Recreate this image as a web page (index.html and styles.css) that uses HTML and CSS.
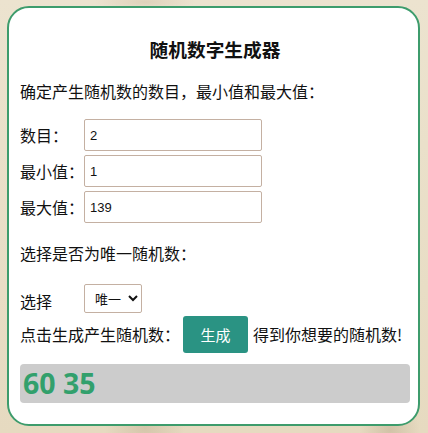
FILE: index.html
```html
<!DOCTYPE html>
<html lang="zh-CN">
<head>
  <meta charset="UTF-8" />
  <meta name="viewport" content="width=device-width, initial-scale=1.0"/>
  <title>随机数字生成器</title>
  <link rel="stylesheet" href="styles.css">
</head>
<body>
  <div class="card">
    <h1>随机数字生成器</h1>
    <p class="intro">确定产生随机数的数目，最小值和最大值：</p>
    <div class="field">
      <label for="count">数目：</label>
      <input id="count" type="text" value="2">
    </div>
    <div class="field">
      <label for="min">最小值：</label>
      <input id="min" type="text" value="1">
    </div>
    <div class="field">
      <label for="max">最大值：</label>
      <input id="max" type="text" value="139">
    </div>
    <p class="unique">选择是否为唯一随机数：</p>
    <div class="field select-row">
      <label for="unique">选择</label>
      <select id="unique">
        <option>唯一</option>
        <option>可重复</option>
      </select>
    </div>
    <div class="action-row">
      <span class="hint">点击生成产生随机数：</span>
      <button class="gen-button">生成</button>
      <span>得到你想要的随机数!</span>
    </div>
    <div class="result">60 35</div>
  </div>
</body>
</html>
```

FILE: styles.css
```css
* { margin: 0; padding: 0; box-sizing: border-box; }
body {
  font-family: "Noto Sans CJK SC", "Noto Sans", sans-serif;
  background-color: #eadfc8;
  background-image:
    radial-gradient(ellipse 40px 30px at 145px 428px, rgba(180, 160, 130, 0.35), transparent),
    radial-gradient(ellipse 30px 30px at 390px 430px, rgba(170, 150, 120, 0.35), transparent),
    radial-gradient(ellipse 50px 10px at 145px 2px, rgba(190, 170, 140, 0.3), transparent),
    linear-gradient(#ece3cf, #e6dac0);
  color: #111;
  padding: 6px 8px 7px 7px;
  height: 433px;
}
.card {
  background: #fff;
  border: 2px solid #3d9c6c;
  border-radius: 22px;
  padding: 25px 8px 20px 11px;
  height: 420px;
}
h1 {
  font-size: 18.7px;
  font-weight: bold;
  text-align: center;
  line-height: 32px;
  margin-bottom: 16px;
}
p, label, span {
  font-size: 16px;
  line-height: 21px;
}
.intro { margin-bottom: 17px; }
.field {
  display: flex;
  align-items: center;
  margin-bottom: 4px;
}
.field label { flex: none; width: 64px; }
input {
  flex: none;
  width: 178px;
  height: 32px;
  border: 1px solid #c4b0a2;
  border-radius: 2px;
  padding: 0 5px;
  font-family: "Liberation Sans", Arial, sans-serif;
  font-size: 13px;
  color: #111;
}
.unique { margin: 20px 0 20px; }
.select-row { margin-bottom: 3px; }
.select-row label { padding-top: 5px; }
select {
  flex: none;
  width: 58px;
  height: 29px;
  border: 1px solid #c4b0a2;
  border-radius: 2px;
  font-family: "Noto Sans CJK SC", sans-serif;
  font-size: 13px;
  padding-left: 6px;
  background: #fff;
  color: #111;
}
.action-row {
  display: flex;
  align-items: center;
}
.hint { margin-right: 3px; }
.gen-button {
  flex: none;
  width: 65px;
  height: 37px;
  margin-right: 5px;
  background: #2a9383;
  color: #fff;
  border: none;
  border-radius: 3px;
  font-family: "Noto Sans CJK SC", sans-serif;
  font-size: 15px;
}
.result {
  margin-top: 11px;
  background: #cccccc;
  border-radius: 4px;
  height: 39px;
  padding-left: 3px;
  font-family: "Open Sans", "Noto Sans", sans-serif;
  font-weight: bold;
  font-size: 28.5px;
  line-height: 39px;
  color: #32a06c;
}
```
